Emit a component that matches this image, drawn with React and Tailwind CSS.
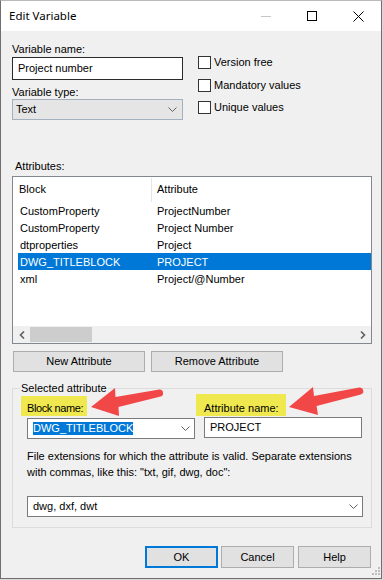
import React from "react";

function Chevron() {
  return (
    <svg width="9" height="5" viewBox="0 0 9 5">
      <path d="M0.5 0.5 L4.5 4.5 L8.5 0.5" fill="none" stroke="#606060" strokeWidth="1" />
    </svg>
  );
}

function Check({ label, className = "" }) {
  return (
    <div className={"flex h-[13px] items-center " + className}>
      <div className="h-[13px] w-[13px] border border-[#333333] bg-white" />
      <span className="ml-[3px] leading-[13px]">{label}</span>
    </div>
  );
}

const rows = [
  ["CustomProperty", "ProjectNumber"],
  ["CustomProperty", "Project Number"],
  ["dtproperties", "Project"],
  ["DWG_TITLEBLOCK", "PROJECT"],
  ["xml", "Project/@Number"],
];

export default function App() {
  return (
    <div className="relative h-[580px] w-[383px] overflow-hidden bg-[#d9d9d9] font-['Liberation_Sans',Arial,sans-serif] text-[11px] text-black">
      <div className="flex h-[579px] w-[382px] flex-col border-b border-l border-r border-t border-[#6f6f6f] border-t-[#b9b9b9] bg-[#f0f0f0]">
        {/* Title bar */}
        <div className="flex h-[30px] items-center bg-white">
          <span className="pl-[8px] font-['Noto_Sans',sans-serif] text-[11.5px] leading-[30px]">Edit Variable</span>
          <div className="ml-auto flex h-[30px]">
            <div className="flex w-[46px] items-center justify-center">
              <div className="h-px w-[10px] bg-[#c6c6c6]" />
            </div>
            <div className="flex w-[46px] items-center justify-center">
              <div className="h-[10px] w-[10px] border border-black" />
            </div>
            <div className="flex w-[46px] items-center justify-center">
              <svg width="11" height="11" viewBox="0 0 11 11">
                <path d="M0.5 0.5 L10.5 10.5 M10.5 0.5 L0.5 10.5" stroke="#000" strokeWidth="1" />
              </svg>
            </div>
          </div>
        </div>

        {/* Body */}
        <div className="flex flex-1 flex-col pl-[11px] pt-[12px]">
          <div className="flex">
            <div className="flex w-[171px] flex-col">
              <div className="h-[13px] leading-[13px]">Variable name:</div>
              <div className="mt-px flex h-[23px] items-center border border-[#2b2b2b] bg-white pl-[5px]">Project number</div>
              <div className="mt-[6px] h-[13px] leading-[13px]">Variable type:</div>
              <div className="flex h-[21px] items-center justify-between border border-[#a3b0bf] bg-[#e5e5e5] pl-[3px] pr-[5px]">
                <span>Text</span>
                <Chevron />
              </div>
            </div>
            <div className="ml-[15px] flex flex-col pt-[13px]">
              <Check label="Version free" />
              <Check label="Mandatory values" className="mt-[10px]" />
              <Check label="Unique values" className="mt-[9px]" />
            </div>
          </div>

          <div className="ml-[3px] mt-[40px] h-[13px] leading-[13px]">Attributes:</div>

          {/* List */}
          <div className="mt-[3px] flex h-[168px] w-[360px] flex-col border border-[#828790] bg-white">
            <div className="flex h-[25px] items-center">
              <div className="w-[138px] pl-[6px]">Block</div>
              <div className="h-[24px] w-px bg-[#e5e5e5]" />
              <div className="pl-[5px]">Attribute</div>
            </div>
            {rows.map(([a, b], i) => (
              <div
                key={i}
                className={
                  "ml-[5px] flex h-[17px] items-center pt-px " +
                  (i === 3 ? "bg-[#0078d7] text-white" : "")
                }
              >
                <div className="w-[137px] pl-[2px]">{a}</div>
                <div className="pl-[2px]">{b}</div>
              </div>
            ))}
            <div className="flex-1" />
            <div className="flex h-[17px] items-center bg-[#f0f0f0]">
              <div className="flex w-[17px] items-center justify-center">
                <svg width="6" height="8" viewBox="0 0 6 8">
                  <path d="M5 0.5 L1.5 4 L5 7.5" fill="none" stroke="#606060" strokeWidth="1.6" />
                </svg>
              </div>
              <div className="h-[15px] w-[62px] bg-[#cdcdcd]" />
              <div className="flex-1" />
              <div className="flex w-[17px] items-center justify-center">
                <svg width="6" height="8" viewBox="0 0 6 8">
                  <path d="M1 0.5 L4.5 4 L1 7.5" fill="none" stroke="#606060" strokeWidth="1.6" />
                </svg>
              </div>
            </div>
          </div>

          {/* Attribute buttons */}
          <div className="ml-px mt-[7px] flex">
            <div className="flex h-[21px] w-[132px] items-center justify-center border border-[#adadad] bg-[#e1e1e1]">New Attribute</div>
            <div className="ml-[6px] flex h-[21px] w-[132px] items-center justify-center border border-[#adadad] bg-[#e1e1e1]">Remove Attribute</div>
          </div>

          {/* Group box */}
          <fieldset className="mt-[10px] w-[360px] border border-[#dcdcdc] pb-[10px]">
            <legend className="ml-[7px] px-px leading-[13px]">Selected attribute</legend>
            <div className="mt-px flex">
              <div className="ml-[8px] flex w-[175px] flex-col">
                <div className="h-[20px] w-[66px] whitespace-nowrap bg-[#efe84f] pl-[6px] pt-[6px] leading-[13px] tracking-[-0.4px]">Block name:</div>
                <div className="ml-[6px] mt-[2px] flex h-[21px] w-[168px] items-center justify-between border border-[#7a7a7a] bg-white pl-[5px] pr-[4px]">
                  <span className="bg-[#0078d7] leading-[13px] text-white">DWG_TITLEBLOCK</span>
                  <Chevron />
                </div>
              </div>
              <div className="flex flex-col">
                <div className="-mt-[2px] h-[22px] w-[90px] whitespace-nowrap bg-[#efe84f] pl-[8px] pt-[8px] leading-[13px]">Attribute name:</div>
                <div className="ml-[8px] mt-[1px] flex h-[21px] w-[158px] items-center border border-[#7a7a7a] bg-white pl-[5px]">PROJECT</div>
              </div>
            </div>
            <p className="ml-[14px] mt-[9px] whitespace-nowrap leading-[16px]">
              File extensions for which the attribute is valid. Separate extensions
              <br />
              with commas, like this: "txt, gif, dwg, doc":
            </p>
            <div className="ml-[14px] mt-[16px] flex h-[21px] w-[336px] items-center justify-between border border-[#7a7a7a] bg-white pl-[5px] pr-[4px]">
              <span>dwg, dxf, dwt</span>
              <Chevron />
            </div>
          </fieldset>

          {/* Dialog buttons */}
          <div className="mt-[18px] flex justify-end pr-[10px]">
            <div className="flex h-[22px] w-[73px] items-center justify-center border-2 border-[#0078d7] bg-[#e1e1e1]">OK</div>
            <div className="ml-[3px] flex h-[22px] w-[73px] items-center justify-center border border-[#adadad] bg-[#e1e1e1]">Cancel</div>
            <div className="ml-[4px] flex h-[22px] w-[73px] items-center justify-center border border-[#adadad] bg-[#e1e1e1]">Help</div>
          </div>
        </div>
      </div>

      {/* size grip */}
      <svg className="absolute left-[372px] top-[567px]" width="9" height="10" viewBox="0 0 9 10">
        <g fill="#bdbdbd">
          <rect x="6" y="0" width="2" height="2" />
          <rect x="3" y="3" width="2" height="2" />
          <rect x="6" y="3" width="2" height="2" />
          <rect x="0" y="6" width="2" height="2" />
          <rect x="3" y="6" width="2" height="2" />
          <rect x="6" y="6" width="2" height="2" />
        </g>
      </svg>

      {/* red annotation arrows */}
      <svg className="pointer-events-none absolute left-0 top-0" width="383" height="580" viewBox="0 0 383 580">
        <path
          d="M91 407 L115 388 L115.5 397 L159.3 389.6 A3.5 3.5 0 0 1 160.7 396.4 L118.5 407 L119 416 Z"
          fill="#f24747"
        />
        <path
          d="M289 407 L313 387 L314 396 L359.2 387.6 A3.5 3.5 0 0 1 360.8 394.4 L316.6 406 L318 415 Z"
          fill="#f24747"
        />
      </svg>
    </div>
  );
}
